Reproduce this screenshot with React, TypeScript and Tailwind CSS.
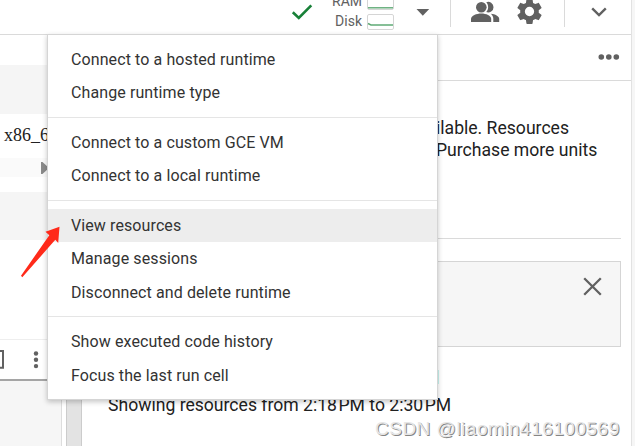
import React from "react";

const groups: string[][] = [
  ["Connect to a hosted runtime", "Change runtime type"],
  ["Connect to a custom GCE VM", "Connect to a local runtime"],
  ["View resources", "Manage sessions", "Disconnect and delete runtime"],
  ["Show executed code history", "Focus the last run cell"],
];

function Meter({ d }: { d: string }) {
  return (
    <svg width="27" height="16" viewBox="0 0 27 16" className="block shrink-0">
      <rect x="0.5" y="0.5" width="26" height="15" rx="1.5" fill="#fff" stroke="#d5d5d5" />
      <path d={d} fill="none" stroke="#5faa75" strokeWidth="1.4" />
    </svg>
  );
}

function Header() {
  return (
    <header className="flex h-[35px] shrink-0 items-start border-b border-[#dadada] bg-white pl-[290px] text-[#616161]">
      <svg width="24" height="24" viewBox="0 0 24 24" className="shrink-0">
        <path d="M2.8 12.2 8.8 18 21.3 5.3" fill="none" stroke="#188038" strokeWidth="2.6" />
      </svg>
      <div className="-mt-[9px] ml-[10px] w-[38px] shrink-0 text-right text-[14px] leading-[20px]">
        <div>RAM</div>
        <div>Disk</div>
      </div>
      <div className="-mt-[6px] ml-[5px] flex shrink-0 flex-col gap-[4px]">
        <Meter d="M1 13.8H26" />
        <Meter d="M1 9.5 4 11H26" />
      </div>
      <svg width="14" height="8" viewBox="0 0 14 8" className="ml-[22px] mt-[9px] shrink-0">
        <path d="M0.5 0H13.2L6.8 6.8Z" fill="#616161" />
      </svg>
      <div className="ml-[20px] h-[27px] w-px shrink-0 bg-[#dadada]" />
      <svg width="29" height="24" viewBox="0 0 29 24" className="ml-[20px] shrink-0" fill="#616161">
        <circle cx="10.3" cy="7.2" r="5.3" />
        <path d="M0 22V18.8C0 15.5 5.5 13.4 10.3 13.4S20.2 15.5 20.2 18.8V22Z" />
        <path d="M15.2 2.3A5.3 5.3 0 1 1 15.2 12.1C17.8 9.4 17.8 5 15.2 2.3Z" />
        <path d="M19.8 13.7C24.2 14.2 28.2 16 28.2 18.8V22H22.3V18.6C22.3 16.6 21.3 14.9 19.8 13.7Z" />
      </svg>
      <svg width="31" height="31" viewBox="0 0 24 24" className="-mt-[4px] ml-[14px] shrink-0" fill="#616161">
        <path d="M19.14 12.94c.04-.3.06-.61.06-.94 0-.32-.02-.64-.07-.94l2.03-1.58c.18-.14.23-.41.12-.61l-1.92-3.32c-.12-.22-.37-.29-.59-.22l-2.39.96c-.5-.38-1.03-.7-1.62-.94L14.4 2.81c-.04-.24-.24-.41-.48-.41h-3.84c-.24 0-.43.17-.47.41l-.36 2.54c-.59.24-1.13.57-1.62.94l-2.39-.96c-.22-.08-.47 0-.59.22L2.74 8.87c-.12.21-.08.47.12.61l2.03 1.58c-.05.3-.09.63-.09.94s.02.64.07.94l-2.03 1.58c-.18.14-.23.41-.12.61l1.92 3.32c.12.22.37.29.59.22l2.39-.96c.5.38 1.03.7 1.62.94l.36 2.54c.05.24.24.41.48.41h3.84c.24 0 .44-.17.47-.41l.36-2.54c.59-.24 1.13-.56 1.62-.94l2.39.96c.22.08.47 0 .59-.22l1.92-3.32c.12-.22.07-.47-.12-.61zM12 15.6A3.6 3.6 0 1 1 12 8.4a3.6 3.6 0 0 1 0 7.2z" />
      </svg>
      <div className="ml-[19px] h-[27px] w-px shrink-0 bg-[#dadada]" />
      <svg width="16" height="10" viewBox="0 0 16 10" className="ml-[26px] mt-[7px] shrink-0">
        <path d="M1.2 1.3 8 8 14.8 1.3" fill="none" stroke="#616161" strokeWidth="2.4" />
      </svg>
    </header>
  );
}

function Notebook() {
  return (
    <section className="flex w-[62px] shrink-0 flex-col border-r border-[#dddddd] bg-white">
      <div className="mt-[30px] h-[49px] bg-[#f5f5f5]" />
      <div className="h-[44px] overflow-hidden whitespace-nowrap pl-[4px] pt-[11px] font-['Liberation_Serif',serif] text-[18px] leading-[20px] text-[#212121]">
        x86_64
      </div>
      <div className="flex h-[19px] items-center bg-[#fafafa] pl-[41px]">
        <svg width="8" height="12" viewBox="0 0 8 12">
          <path d="M0 0H1.5L8 6 1.5 12H0Z" fill="#8a8a8a" />
        </svg>
      </div>
      <div className="mt-[15px] h-[48px] bg-[#f5f5f5]" />
      <div className="mt-[99px] flex h-[42px] items-center border-b-2 border-t border-b-[#a5a5a5] border-t-[#eeeeee] bg-white">
        <svg width="4" height="19" viewBox="0 0 4 19" className="shrink-0">
          <path d="M0 1H3V17.8H0" fill="none" stroke="#616161" strokeWidth="2" />
        </svg>
        <svg width="6" height="18" viewBox="0 0 6 18" className="ml-[29px] shrink-0" fill="#616161">
          <circle cx="3" cy="2.5" r="2.2" />
          <circle cx="3" cy="8.8" r="2.2" />
          <circle cx="3" cy="15.1" r="2.2" />
        </svg>
      </div>
      <div className="flex-1 bg-[#f6f6f6]" />
    </section>
  );
}

function ResourcesPanel() {
  return (
    <section className="flex min-w-0 flex-1 flex-col bg-white text-[17.6px] leading-[22px] text-[#212121]">
      <div className="flex h-[46px] shrink-0 items-center justify-end border-b border-[#dadada] pb-[1px] pr-[11px]">
        <svg width="22" height="6" viewBox="0 0 22 6" fill="#616161">
          <circle cx="3.3" cy="3" r="2.8" />
          <circle cx="10.8" cy="3" r="2.8" />
          <circle cx="18.3" cy="3" r="2.8" />
        </svg>
      </div>
      <div className="mr-[10px] h-[158px] shrink-0 whitespace-nowrap border-b border-[#dadada] pl-[354px] pt-[36px]">
        <p>ilable. Resources</p>
        <p>Purchase more units</p>
      </div>
      <div className="ml-[26px] mr-[10px] mt-[22px] flex h-[86px] shrink-0 justify-end border border-[#d5d5d5] bg-[#f6f6f6] pr-[18px] pt-[15px]">
        <svg width="19" height="19" viewBox="0 0 19 19">
          <path d="M1.2 1.2 17.8 17.8M17.8 1.2 1.2 17.8" stroke="#616161" strokeWidth="2.3" />
        </svg>
      </div>
      <div className="ml-[26px] mt-[23px] h-[14px] w-[331px] shrink-0 bg-[#c8f5f1]" />
      <p className="mt-[10px] whitespace-nowrap pl-[26px]">
        Showing resources from 2:18<span className="ml-[1.5px]">PM</span> to 2:30<span className="ml-[1.5px]">PM</span>
      </p>
    </section>
  );
}

function RuntimeMenu() {
  return (
    <nav className="absolute left-[47px] top-[34px] h-[366px] w-[391px] border border-[#d5d5d5] bg-white py-[8px] shadow-[0_2px_5px_rgba(0,0,0,0.22)]">
      {groups.map((items, i) => (
        <ul key={i} className={i > 0 ? "mt-[8px] border-t border-[#e5e5e5] pt-[8px]" : ""}>
          {items.map((label, j) => (
            <li
              key={label}
              className={
                "flex h-[33px] items-center pl-[23px] text-[16px] leading-[20px] tracking-[0.1px] text-[#333333] " +
                (label === "View resources" ? "bg-[#ededed] " : "") +
                (j === 2 || (i === 3 && j === 1) ? "pt-[2px]" : "")
              }
            >
              {label}
            </li>
          ))}
        </ul>
      ))}
    </nav>
  );
}

export default function App() {
  return (
    <main className="relative flex h-[446px] w-[635px] flex-col overflow-hidden bg-white font-['Roboto',sans-serif]">
      <div className="flex min-h-0 flex-1">
        <div className="flex w-[632px] shrink-0 flex-col border-r border-[#e2e2e2]">
          <Header />
          <div className="flex min-h-0 flex-1">
            <Notebook />
            <div className="w-[20px] shrink-0 border-l-4 border-white">
              <div className="h-full border-x border-[#cccccc] bg-[#e3e3e3]" />
            </div>
            <ResourcesPanel />
          </div>
        </div>
        <div className="flex-1 bg-[#f6f6f6]" />
      </div>
      <RuntimeMenu />
      <svg width="42" height="54" viewBox="0 0 42 54" className="absolute left-[20px] top-[225px]">
        <path d="M39.5 1.8 25.5 6.8 29.3 10.2 1 50.8 2.3 52.2 35.3 14.8 38.2 18Z" fill="#ff2a1a" />
      </svg>
      <div className="absolute left-[375px] top-[418px] whitespace-nowrap font-['Liberation_Sans',sans-serif] text-[19px] leading-[22px] tracking-[0.5px] text-[#e6e6e6] [text-shadow:1px_1px_0_#858585]">
        CSDN @liaomin416100569
      </div>
    </main>
  );
}
